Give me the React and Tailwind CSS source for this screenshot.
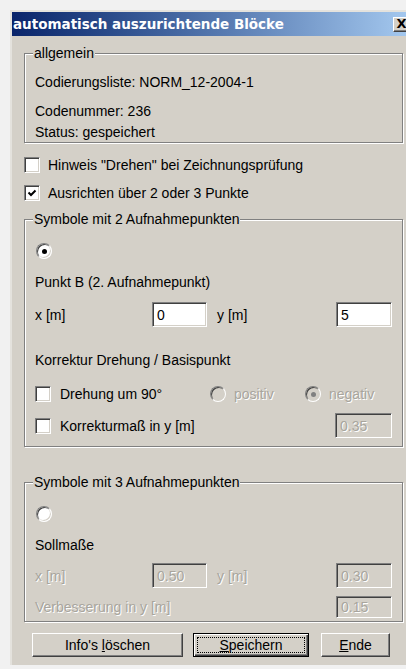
import React from 'react';

// classic 3D edges
const sunken =
  'border border-t-[#808080] border-l-[#808080] border-r-white border-b-white shadow-[inset_1px_1px_0_#404040,inset_-1px_-1px_0_#d4d0c8]';
const raised =
  'border border-t-white border-l-white border-r-[#404040] border-b-[#404040] shadow-[inset_-1px_-1px_0_#808080,inset_1px_1px_0_#d4d0c8]';
const grayText = 'text-[#a8a59d] [text-shadow:1px_1px_0_#fff]';

function CheckBox({ checked }) {
  return (
    <span className={`flex h-4 w-4 shrink-0 items-center justify-center bg-white ${sunken}`}>
      {checked && (
        <svg width="10" height="10" viewBox="0 0 10 10">
          <path d="M1.5 4.5 L4 7 L8.5 2.5" stroke="#000" strokeWidth="2" fill="none" />
        </svg>
      )}
    </span>
  );
}

function Radio({ checked, disabled }) {
  return (
    <span
      className={`flex h-4 w-4 shrink-0 items-center justify-center rounded-full border border-t-[#808080] border-l-[#808080] border-r-white border-b-white shadow-[inset_1px_1px_0_#404040,inset_-1px_-1px_0_#d4d0c8] ${
        disabled ? 'bg-[#d4d0c8]' : 'bg-white'
      }`}
    >
      {checked && <span className={`h-[5px] w-[5px] rounded-full ${disabled ? 'bg-[#808080]' : 'bg-black'}`} />}
    </span>
  );
}

function Field({ value, disabled, className = '' }) {
  return (
    <div
      className={`flex items-center pl-[4px] ${sunken} ${disabled ? `bg-[#d4d0c8] ${grayText}` : 'bg-white text-black'} ${className}`}
    >
      {value}
    </div>
  );
}

function Group({ title, className = '', children }) {
  return (
    <fieldset
      className={`min-w-0 border border-[#808080] pl-[10px] pr-[10px] shadow-[inset_1px_1px_0_#fff,1px_1px_0_#fff] ${className}`}
    >
      <legend className="ml-[-2px] bg-[#d4d0c8] px-[1px] leading-4">{title}</legend>
      {children}
    </fieldset>
  );
}

function Button({ children, isDefault, className = '' }) {
  if (isDefault) {
    return (
      <button
        className={`flex h-[24px] border border-black bg-[#d4d0c8] p-[3px] shadow-[inset_1px_1px_0_#fff,inset_-1px_-1px_0_#404040,inset_-2px_-2px_0_#808080] ${className}`}
      >
        <span className="flex flex-1 items-center justify-center border border-dotted border-black">{children}</span>
      </button>
    );
  }
  return (
    <button className={`flex h-[24px] items-center justify-center bg-[#d4d0c8] ${raised} ${className}`}>
      {children}
    </button>
  );
}

export default function App() {
  return (
    <div className="h-[669px] overflow-hidden bg-[#f1f1f1] pt-[10px] pl-[10px] font-['Liberation_Sans',Arial,sans-serif] text-[14px] leading-4 text-black">
      <div className="w-[402px] border-t-2 border-l-2 border-[#e4e2dd] bg-[#d4d0c8] pb-[8px]">
        {/* title bar */}
        <div className="flex h-[24px] items-center bg-linear-to-r from-[#0a246a] to-[#a6caf0] pl-[1px] pr-[2px]">
          <span className="flex-1 font-['DejaVu_Sans',sans-serif] text-[13.5px] font-bold text-white">
            automatisch auszurichtende Blöcke
          </span>
          <span className={`flex h-[15px] w-[17px] items-center justify-center bg-[#d4d0c8] font-['DejaVu_Sans',sans-serif] text-[13px] font-bold ${raised}`}>
            X
          </span>
        </div>

        <div className="pl-[12px] pr-[9px]">
          <Group title="allgemein" className="mt-[9px] pb-[2px]">
            <div className="mt-[13px]">Codierungsliste: NORM_12-2004-1</div>
            <div className="mt-[13px]">Codenummer: 236</div>
            <div className="mt-[5px]">Status: gespeichert</div>
          </Group>

          <label className="mt-[14px] flex items-center gap-[8px]">
            <CheckBox />
            <span>Hinweis "Drehen" bei Zeichnungsprüfung</span>
          </label>
          <label className="mt-[12px] flex items-center gap-[8px]">
            <CheckBox checked />
            <span>Ausrichten über 2 oder 3 Punkte</span>
          </label>

          <Group title="Symbole mit 2 Aufnahmepunkten" className="mt-[10px] pb-[8px]">
            <div className="mt-[16px] flex pl-[1px]">
              <Radio checked />
            </div>
            <div className="mt-[15px]">Punkt B (2. Aufnahmepunkt)</div>
            <div className="mt-[12px] flex items-center">
              <span className="w-[117px]">x [m]</span>
              <Field value="0" className="h-[25px] w-[55px]" />
              <span className="ml-[10px] flex-1">y [m]</span>
              <Field value="5" className="h-[25px] w-[56px]" />
            </div>
            <div className="mt-[25px]">Korrektur Drehung / Basispunkt</div>
            <div className="mt-[18px] flex items-center">
              <label className="flex w-[175px] items-center gap-[9px]">
                <CheckBox />
                <span>Drehung um 90°</span>
              </label>
              <span className="flex w-[95px] items-center gap-[8px]">
                <Radio disabled />
                <span className={grayText}>positiv</span>
              </span>
              <span className="flex items-center gap-[8px]">
                <Radio checked disabled />
                <span className={grayText}>negativ</span>
              </span>
            </div>
            <div className="mt-[11px] flex items-center">
              <label className="flex flex-1 items-center gap-[9px]">
                <CheckBox />
                <span>Korrekturmaß in y [m]</span>
              </label>
              <Field value="0.35" disabled className="h-[25px] w-[57px]" />
            </div>
          </Group>

          <Group title="Symbole mit 3 Aufnahmepunkten" className="mt-[27px] pb-[3px]">
            <div className="mt-[16px] flex pl-[1px]">
              <Radio />
            </div>
            <div className="mt-[15px]">Sollmaße</div>
            <div className="mt-[10px] flex items-center">
              <span className={`w-[117px] ${grayText}`}>x [m]</span>
              <Field value="0.50" disabled className="h-[25px] w-[55px]" />
              <span className={`ml-[10px] flex-1 ${grayText}`}>y [m]</span>
              <Field value="0.30" disabled className="h-[25px] w-[56px]" />
            </div>
            <div className="mt-[8px] flex items-center">
              <span className={`flex-1 ${grayText}`}>Verbesserung in y [m]</span>
              <Field value="0.15" disabled className="h-[22px] w-[56px]" />
            </div>
          </Group>

          <div className="mt-[11px] flex pl-[8px]">
            <Button className="w-[151px]">
              <span className="whitespace-pre">Info's </span>
              <span className="underline">l</span>öschen
            </Button>
            <Button isDefault className="ml-[10px] w-[116px]">
              <span className="underline">S</span>peichern
            </Button>
            <Button className="ml-[12px] w-[69px]">
              <span className="underline">E</span>nde
            </Button>
          </div>
        </div>
      </div>
    </div>
  );
}
